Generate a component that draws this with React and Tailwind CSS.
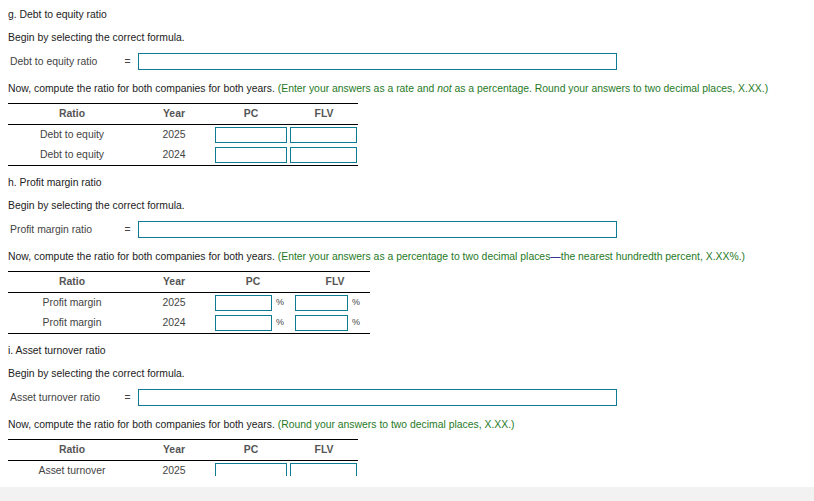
import { Fragment } from "react";

const sections = [
  {
    title: "g. Debt to equity ratio",
    label: "Debt to equity ratio",
    note: (
      <>
        Enter your answers as a rate and <em>not</em> as a percentage. Round your answers to two decimal places, X.XX.
      </>
    ),
    rowLabel: "Debt to equity",
    percent: false,
  },
  {
    title: "h. Profit margin ratio",
    label: "Profit margin ratio",
    note: (
      <>
        Enter your answers as a percentage to two decimal places
        <span className="text-[#000080]">—</span>the nearest hundredth percent, X.XX%.
      </>
    ),
    rowLabel: "Profit margin",
    percent: true,
  },
  {
    title: "i. Asset turnover ratio",
    label: "Asset turnover ratio",
    note: <>Round your answers to two decimal places, X.XX.</>,
    rowLabel: "Asset turnover",
    percent: false,
  },
];

const Box = ({ className }) => (
  <div className={`h-[16px] border-[1.5px] border-[#0e7b93] bg-white ${className}`} />
);

const RatioTable = ({ item }) => {
  const years = ["2025", "2024"];
  return (
    <div
      className={`mt-[9px] border-t border-b border-black ${
        item.percent ? "w-[362px]" : "w-[350px]"
      }`}
    >
      <div className="flex h-[21px] items-center border-b border-black font-bold text-[#555]">
        <div className="w-[128px] text-center">Ratio</div>
        <div className="w-[76px] text-center">Year</div>
        {item.percent ? (
          <>
            <div className="w-[82px] text-center">PC</div>
            <div className="w-[76px] text-center pl-[6px]">FLV</div>
          </>
        ) : (
          <>
            <div className="w-[78px] text-center">PC</div>
            <div className="w-[68px] text-center">FLV</div>
          </>
        )}
      </div>
      {years.map((y) => (
        <div key={y} className="flex h-[20px] items-center text-[#444]">
          <div className="w-[128px] text-center">{item.rowLabel}</div>
          <div className="w-[76px] text-center">{y}</div>
          {item.percent ? (
            <>
              <div className="flex w-[82px] items-center pl-[3px]">
                <Box className="w-[57px]" />
                <span className="ml-[4px] text-[9px]">%</span>
              </div>
              <div className="flex w-[76px] items-center pl-[1px]">
                <Box className="w-[53px]" />
                <span className="ml-[4px] text-[9px]">%</span>
              </div>
            </>
          ) : (
            <>
              <div className="w-[78px] pl-[3px]">
                <Box className="w-[72px]" />
              </div>
              <div className="w-[68px]">
                <Box className="w-[67px]" />
              </div>
            </>
          )}
        </div>
      ))}
    </div>
  );
};

export default function App() {
  return (
    <div
      className="flex h-[501px] w-[814px] flex-col bg-white text-[10.4px] text-[#222]"
      style={{ fontFamily: '"Liberation Sans", Arial, sans-serif' }}
    >
      <div className="h-[476px] shrink-0 overflow-hidden px-2 pt-[9px]">
        {sections.map((item, i) => (
          <Fragment key={i}>
            <div className={`leading-[11px] ${i > 0 ? "mt-[11px]" : ""}`}>{item.title}</div>
            <div className="mt-[12px] leading-[11px]">Begin by selecting the correct formula.</div>
            <div className="mt-[10px] flex h-[17px] items-center">
              <div className="w-[114px] pl-[2px] text-[#444]">{item.label}</div>
              <div className="w-[11px] text-center text-[#444]">=</div>
              <div className="ml-[5px] h-[17px] w-[479px] border-[1.5px] border-[#0e7b93]" />
            </div>
            <div className="mt-[13px] leading-[11px]">
              Now, compute the ratio for both companies for both years.{" "}
              <span className="text-[#1f7a1f]">({item.note})</span>
            </div>
            <RatioTable item={item} />
          </Fragment>
        ))}
      </div>
      <div className="h-[11px] bg-white" />
      <div className="flex-1 bg-[#f2f2f2]" />
    </div>
  );
}
